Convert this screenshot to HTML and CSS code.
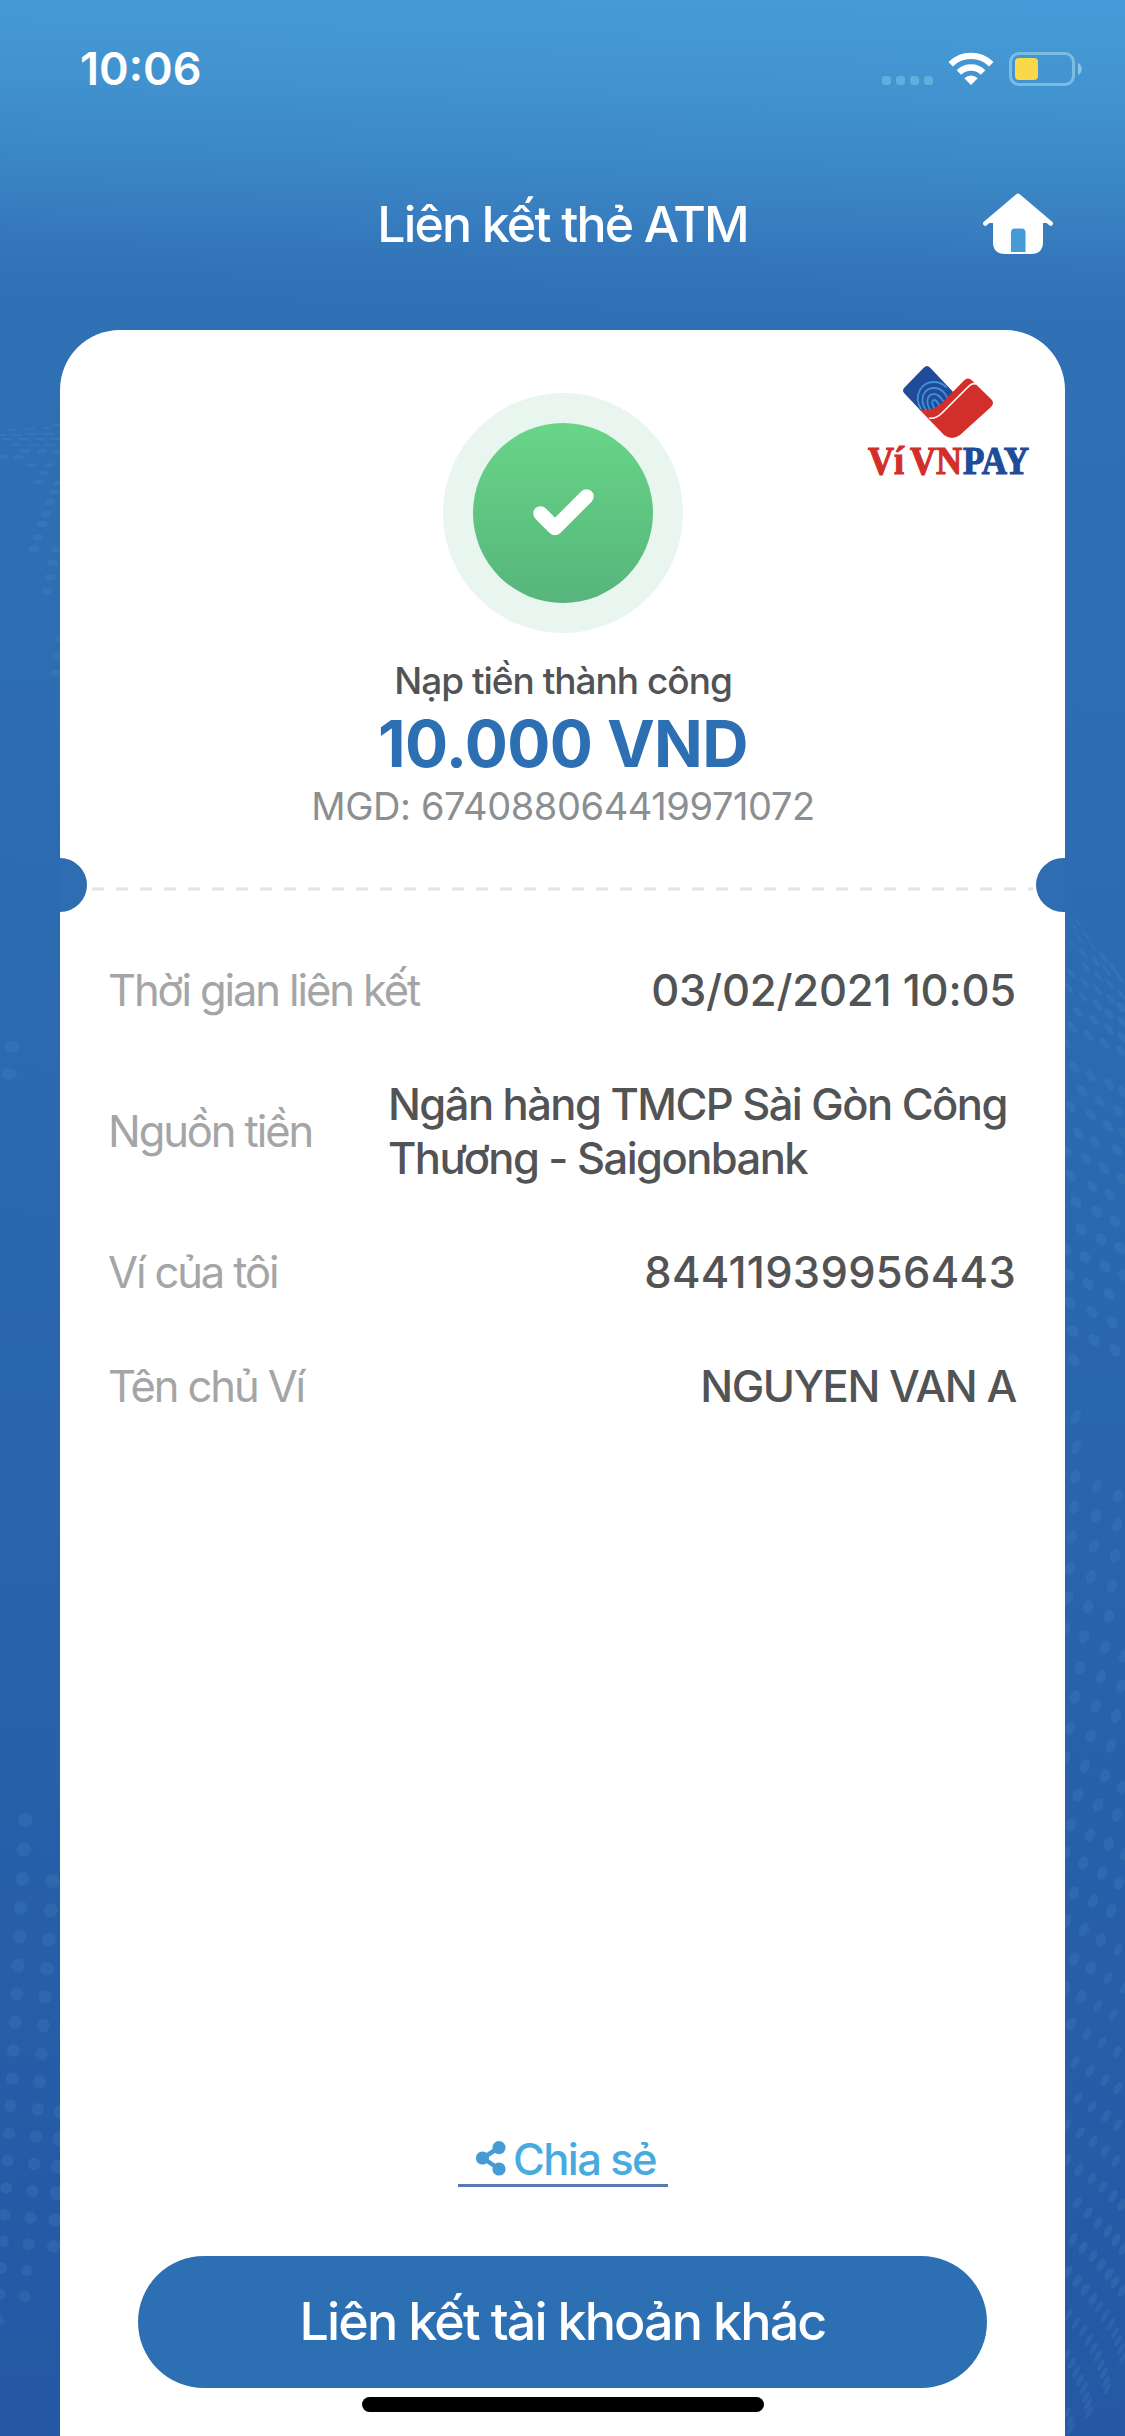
FILE: index.html
```html
<!DOCTYPE html>
<html lang="vi">
<head>
  <meta charset="UTF-8">
  <meta name="viewport" content="width=device-width, initial-scale=1.0">
  <title>Liên kết thẻ ATM</title>
  <link rel="stylesheet" href="styles.css">
</head>
<body>
  <svg class="dots" id="dots" width="1125" height="2436" viewBox="0 0 1125 2436"></svg>

  <div class="screen">
    <div class="status-bar">
      <span class="time">10:06</span>
      <svg class="status-icons" width="202" height="36" viewBox="0 0 202 36">
        <g fill="#5fafdc">
          <rect x="2" y="25" width="9" height="9" rx="3"/>
          <rect x="16" y="25" width="9" height="9" rx="3"/>
          <rect x="30" y="25" width="9" height="9" rx="3"/>
          <rect x="44" y="25" width="9" height="9" rx="3"/>
        </g>
        <g fill="none" stroke="#fff" stroke-width="6.4">
          <path d="M70.700 13.200a29 29 0 0 1 40.600 0"/>
          <path d="M78.900 21.500a17.300 17.300 0 0 1 24.200 0"/>
        </g>
        <path d="M84.300 27.200a9.800 9.800 0 0 1 13.400 0L91 34z" fill="#fff"/>
        <rect x="130.500" y="2.500" width="63" height="31" rx="8.500" fill="none" stroke="#7dbce2" stroke-width="3"/>
        <rect x="135" y="7" width="23" height="22" rx="4" fill="#f9d84a"/>
        <path d="M198 12c5 2 5 10 0 12z" fill="#8cc4e6"/>
      </svg>
    </div>

    <div class="nav-bar">
      <h1>Liên kết thẻ ATM</h1>
      <svg class="home" width="72" height="62" viewBox="0 0 72 62">
        <path d="M11 25h50v24q0 12-12 12H23q-12 0-12-12z" fill="#fff"/>
        <path d="M36 2.500L68.500 30H3.500z" fill="#fff"/>
        <path d="M3.300 30.500L36 2.800l32.700 27.700" fill="none" stroke="#fff" stroke-width="4.500" stroke-linecap="round" stroke-linejoin="round"/>
        <path d="M29 59V39.500q0-4 4-4h6.500q4 0 4 4V59z" fill="#469bd6"/>
      </svg>
    </div>

    <div class="card">
      <svg class="logo" width="180" height="120" viewBox="0 0 180 120">
        <path d="M66 35L40 7.500q-3-3-6 0L14.500 27.500q-3 3 0 6L31 51l18-1z" fill="#1f4b98"/>
        <g fill="none" stroke="#3f8fd4" stroke-width="1.800" stroke-linecap="round">
          <path d="M31 49c-8-13 0-27 13-27 5 0 9 2 12 5"/>
          <path d="M36 50c-7-10-3-22 8-22 7 0 11 5 13 9"/>
          <path d="M41 51c-6-8-4-17 3-17 5 0 7 4 9 7"/>
          <path d="M46 50c-4-4-5-10-2-10 2 0 4 3 5 5"/>
        </g>
        <path d="M29 49c9 3 17 0 24-7L74 20.500q4-4 8 0l19 18.500q4 4 0 8L70 75q-8 6-16 0z" fill="#d22f2a"/>
        <path d="M39 58c5 1 9-1 13-5L79 26c2-2 4-3 7-2" fill="none" stroke="#fff" stroke-width="1.700"/>
        <g font-family="Liberation Serif, serif" font-weight="700" font-size="39" stroke-width="1.200">
          <text x="-22" y="114" textLength="36" lengthAdjust="spacingAndGlyphs" fill="#d22f2a" stroke="#d22f2a">Ví</text>
          <text x="20" y="114" textLength="52" lengthAdjust="spacingAndGlyphs" fill="#d22f2a" stroke="#d22f2a">VN</text>
          <text x="73" y="114" textLength="66" lengthAdjust="spacingAndGlyphs" fill="#1f4b98" stroke="#1f4b98">PAY</text>
        </g>
      </svg>

      <div class="result">
        <div class="check">
          <svg width="180" height="180" viewBox="0 0 180 180">
            <path d="M67.500 90.500L82 105l31.500-31.500" fill="none" stroke="#fff" stroke-width="14.500" stroke-linecap="round" stroke-linejoin="round"/>
          </svg>
        </div>
        <p class="message">Nạp tiền thành công</p>
        <p class="amount">10.000 VND</p>
        <p class="code">MGD: 674088064419971072</p>
      </div>

      <div class="divider">
        <svg width="945" height="4" viewBox="0 0 945 4">
          <path d="M2 2h941" stroke="#e4e4e4" stroke-width="3" stroke-dasharray="12 12"/>
        </svg>
      </div>

      <div class="details">
        <div class="row">
          <span class="label">Thời gian liên kết</span>
          <span class="value date">03/02/2021 10:05</span>
        </div>
        <div class="row bank">
          <span class="label">Nguồn tiền</span>
          <span class="value">Ngân hàng TMCP Sài Gòn Công<br>Thương - Saigonbank</span>
        </div>
        <div class="row">
          <span class="label">Ví của tôi</span>
          <span class="value wallet">84411939956443</span>
        </div>
        <div class="row">
          <span class="label">Tên chủ Ví</span>
          <span class="value name">NGUYEN VAN A</span>
        </div>
      </div>

      <a class="share">
        <svg width="32" height="36" viewBox="0 0 32 36">
          <path d="M24 6.500L8 17l16 11" fill="none" stroke="#469bd6" stroke-width="4.500"/>
          <circle cx="24" cy="6.600" r="6.600" fill="#469bd6"/>
          <circle cx="7.500" cy="17" r="6.600" fill="#469bd6"/>
          <circle cx="24" cy="28" r="6.600" fill="#469bd6"/>
        </svg>
        <span>Chia sẻ</span>
      </a>
      <button class="link-button">Liên kết tài khoản khác</button>
      <div class="home-indicator"></div>
    </div>
  </div>

  <script>
    const svg = document.getElementById("dots");

    function addDot(x, y, rx, ry, angle) {
      const dot = document.createElementNS("http://www.w3.org/2000/svg", "ellipse");
      dot.setAttribute("cx", x);
      dot.setAttribute("cy", y);
      dot.setAttribute("rx", rx);
      dot.setAttribute("ry", ry);
      dot.setAttribute("transform", `rotate(${angle} ${x} ${y})`);
      svg.appendChild(dot);
    }

    // top left, flattened dots
    const topLeft = [
      [12, 430], [30, 429], [47, 428], [58, 425], [2, 435], [17, 435], [32, 434], [48, 434], [7, 439], [23, 439], [40, 439], [55, 439],
      [16, 445], [34, 445], [50, 445], [3, 457], [19, 457], [25, 451], [42, 451], [57, 452],
      [31, 465], [49, 465], [44, 473], [39, 482], [58, 483], [54, 492], [50, 502], [46, 514], [42, 524],
      [38, 537], [34, 549], [56, 550], [53, 563], [50, 577], [47, 591], [60, 639], [58, 656], [56, 673]
    ];
    topLeft.forEach(([x, y]) => addDot(x, y, 5.5, y < 450 ? 1.3 : y < 500 ? 2.2 : 3.2, 0));
    addDot(12, 1047, 7.7, 6, 0);
    addDot(9, 1074, 7.7, 6, 0);

    // bottom left columns: x, y, x drift, y step, shrink, count
    const columns = [
      [25.3, 1820, -1.47, 29.6, 0.1, 19],
      [52.5, 1881, -1.83, 29.5, 0.12, 16],
      [61, 2112, -1.5, 27.4, 0.1, 6]
    ];
    columns.forEach(([x, y, dx, dy, k, n]) => {
      for (let i = 0; i < n; i++) {
        addDot(x + dx * i, y + dy * i - k * i * i, 7.1 - i * 0.09, 7.1 - i * 0.09, 0);
      }
    });

    // right side
    const rightTop = [
      [1069, 918], [1078, 923], [1075, 928], [1086, 935], [1080, 939], [1073, 945], [1093, 947], [1083, 953], [1103, 957],
      [1096, 962], [1086, 967], [1113, 968], [1107, 971], [1071, 973], [1098, 976], [1120, 978], [1085, 983], [1110, 984],
      [1069, 988], [1098, 990], [1121, 994], [1083, 997], [1111, 999], [1097, 1005], [1121, 1007], [1078, 1012], [1109, 1014], [1094, 1020], [1122, 1022],
      [1072, 1027], [1109, 1029], [1088, 1035], [1122, 1037], [1104, 1043], [1066, 1043], [1121, 1051],
      [1074, 1067], [1091, 1076], [1109, 1084], [1123, 1092], [1082, 1091], [1100, 1101], [1118, 1111], [1071, 1107], [1091, 1115], [1108, 1126], [1124, 1133],
      [1078, 1133], [1095, 1142], [1117, 1150], [1086, 1159], [1104, 1168], [1122, 1179], [1067, 1151],
      [1071, 1176], [1092, 1186], [1110, 1195], [1076, 1202], [1097, 1212], [1115, 1221], [1081, 1229], [1101, 1239], [1120, 1248],
      [1085, 1257], [1105, 1266], [1124, 1275], [1088, 1284], [1109, 1294], [1092, 1312], [1112, 1322], [1094, 1340], [1115, 1350],
      [1066, 1249], [1069, 1275], [1070, 1303], [1073, 1331], [1074, 1360]
    ];
    rightTop.forEach(([x, y]) => addDot(x, y, 6.6, y < 950 ? 1 : y < 1000 ? 2 : y < 1060 ? 3 : y < 1200 ? 4 : 5, 52));

    const rightMiddle = [
      [1076, 1417], [1076, 1447], [1075, 1477], [1074, 1507], [1072, 1537], [1070, 1568], [1068, 1598], [1065, 1629],
      [1097, 1486], [1096, 1516], [1094, 1546], [1091, 1577], [1088, 1607], [1084, 1637], [1080, 1668], [1075, 1697], [1070, 1728], [1065, 1758],
      [1118, 1496], [1117, 1525], [1115, 1556], [1112, 1586], [1109, 1616], [1105, 1647], [1101, 1677], [1096, 1706], [1091, 1736], [1085, 1766], [1078, 1795], [1071, 1825], [1065, 1853],
      [1124, 1656], [1121, 1686], [1116, 1716], [1111, 1746], [1105, 1776], [1098, 1805], [1090, 1835], [1083, 1863], [1074, 1893], [1066, 1921],
      [1122, 1787], [1117, 1815], [1109, 1844], [1102, 1873], [1093, 1901], [1084, 1930], [1074, 1959], [1065, 1988],
      [1125, 1854], [1119, 1883], [1111, 1911], [1101, 1940], [1091, 1968], [1081, 1997], [1071, 2024]
    ];
    rightMiddle.forEach(([x, y]) => addDot(x, y, 5, 7, 20));

    const rightBottom = [
      [1118, 1950], [1108, 1978], [1098, 2006], [1087, 2034], [1075, 2062], [1124, 1988], [1113, 2015], [1102, 2043], [1090, 2071], [1078, 2098], [1066, 2125],
      [1117, 2052], [1105, 2080], [1092, 2107], [1080, 2133], [1067, 2160], [1118, 2088], [1106, 2116], [1093, 2142], [1079, 2170],
      [1118, 2125], [1105, 2151], [1092, 2178], [1077, 2203], [1116, 2161], [1103, 2187], [1088, 2213], [1073, 2239],
      [1113, 2196], [1098, 2223], [1083, 2248], [1122, 2205], [1108, 2231], [1093, 2256],
      [1116, 2240], [1101, 2265], [1123, 2249], [1109, 2274], [1115, 2282], [1122, 2291],
      [1068, 2272], [1077, 2281], [1085, 2290], [1093, 2299], [1099, 2307], [1105, 2316], [1111, 2324], [1115, 2333], [1118, 2341], [1121, 2349], [1123, 2358],
      [1069, 2314], [1076, 2323], [1083, 2331], [1089, 2340], [1094, 2348], [1098, 2356], [1101, 2365], [1104, 2373], [1106, 2382], [1107, 2389],
      [1067, 2355], [1072, 2363], [1076, 2372], [1080, 2380], [1084, 2388], [1086, 2397], [1088, 2404], [1089, 2412],
      [1067, 2413], [1070, 2421], [1071, 2428]
    ];
    rightBottom.forEach(([x, y]) => addDot(x, y, y < 2300 ? 3.6 : 2.4, 6.6, 30));
  </script>
</body>
</html>
```
FILE: styles.css
```css
* {
  box-sizing: border-box;
}

body {
  margin: 0;
  width: 1125px;
  height: 2436px;
  overflow: hidden;
  position: relative;
  font-family: Inter, "Liberation Sans", sans-serif;
  color: #525355;
  background: linear-gradient(181.5deg, #469cd8 0, #4294d0 90px, #3c89c7 170px, #3980c1 220px, #3376ba 270px, #3070b5 325px, #2e6fb4 520px, #2c69b0 1070px, #2761aa 1770px, #2458a4 2460px);
}

h1,
p {
  margin: 0;
}

.dots {
  position: absolute;
  left: 0;
  top: 0;
  fill: #5c9bd0;
  fill-opacity: 0.16;
}

.screen {
  position: relative;
  height: 100%;
  display: flex;
  flex-direction: column;
}

.status-bar {
  height: 138px;
  padding: 0 43px 0 80px;
  display: flex;
  align-items: center;
  justify-content: space-between;
  color: #fff;
}

.time {
  font-size: 45px;
  font-weight: 600;
  line-height: 50px;
}

.nav-bar {
  height: 170px;
  padding: 1px 71px 0;
  margin-bottom: 22px;
  display: grid;
  grid-template-columns: 72px 1fr 72px;
  align-items: center;
  color: #fff;
}

.nav-bar h1 {
  grid-column: 2;
  text-align: center;
  font-size: 50px;
  font-weight: 500;
  line-height: 60px;
  letter-spacing: -1.8px;
  white-space: nowrap;
}

.card {
  position: relative;
  flex: 1;
  margin: 0 60px;
  padding: 63px 0 24px;
  border-radius: 60px 60px 0 0;
  background: #fff;
  display: flex;
  flex-direction: column;
  align-items: center;
}

.logo {
  position: absolute;
  top: 30px;
  right: -5px;
  overflow: visible;
}

.result {
  width: 100%;
  padding-left: 1px;
  display: flex;
  flex-direction: column;
  align-items: center;
}

.check {
  width: 240px;
  height: 240px;
  padding: 30px;
  margin-bottom: 24px;
  border-radius: 50%;
  background: #e8f6ef;
}

.check svg {
  display: block;
  border-radius: 50%;
  background: linear-gradient(#68d587, #56b57b);
}

.message {
  font-size: 37px;
  font-weight: 500;
  line-height: 47px;
  letter-spacing: -1px;
}

.amount {
  font-size: 64px;
  font-weight: 700;
  line-height: 79px;
  letter-spacing: -0.6px;
  color: #2c6fb3;
}

.code {
  font-size: 38px;
  line-height: 47px;
  letter-spacing: -0.4px;
  color: #8b8f92;
}

.divider {
  position: relative;
  width: 100%;
  height: 54px;
  margin: 28px 0 51px;
  padding: 29px 30px 0;
  overflow: hidden;
}

.divider svg {
  display: block;
}

.divider::before,
.divider::after {
  content: "";
  position: absolute;
  top: 0;
  width: 54px;
  height: 54px;
  border-radius: 50%;
  background: #2e6db2;
}

.divider::before {
  left: -27px;
}

.divider::after {
  right: -25px;
}

.details {
  width: 100%;
  padding: 0 49px 0 48px;
  display: flex;
  flex-direction: column;
  gap: 60px;
}

.row {
  height: 54px;
  display: flex;
  align-items: center;
  justify-content: space-between;
  font-size: 43.5px;
  line-height: 54px;
  white-space: nowrap;
}

.label {
  letter-spacing: -2.1px;
  color: #a4a5a6;
}

.value {
  font-weight: 500;
}

.date {
  letter-spacing: -0.2px;
}

.wallet {
  letter-spacing: 0.3px;
}

.name {
  letter-spacing: -1.4px;
}

.bank {
  height: 108px;
}

.bank .value {
  width: 628px;
  letter-spacing: -1.55px;
}

.share {
  margin-top: auto;
  width: 210px;
  height: 53px;
  padding-left: 6px;
  border-bottom: 3px solid #557bb0;
  display: flex;
  align-items: center;
  justify-content: center;
  gap: 6px;
  font-size: 43.5px;
  font-weight: 500;
  line-height: 50px;
  letter-spacing: -1.6px;
  white-space: nowrap;
  color: #48abdf;
}

.link-button {
  width: 849px;
  height: 132px;
  margin: 69px 0 9px;
  padding: 0;
  border: none;
  border-radius: 66px;
  background: #2c6fb3;
  color: #fff;
  font-family: inherit;
  font-size: 52px;
  font-weight: 500;
  line-height: 132px;
  letter-spacing: -1.9px;
}

.home-indicator {
  width: 402px;
  height: 15px;
  border-radius: 8px;
  background: #000;
}
```
